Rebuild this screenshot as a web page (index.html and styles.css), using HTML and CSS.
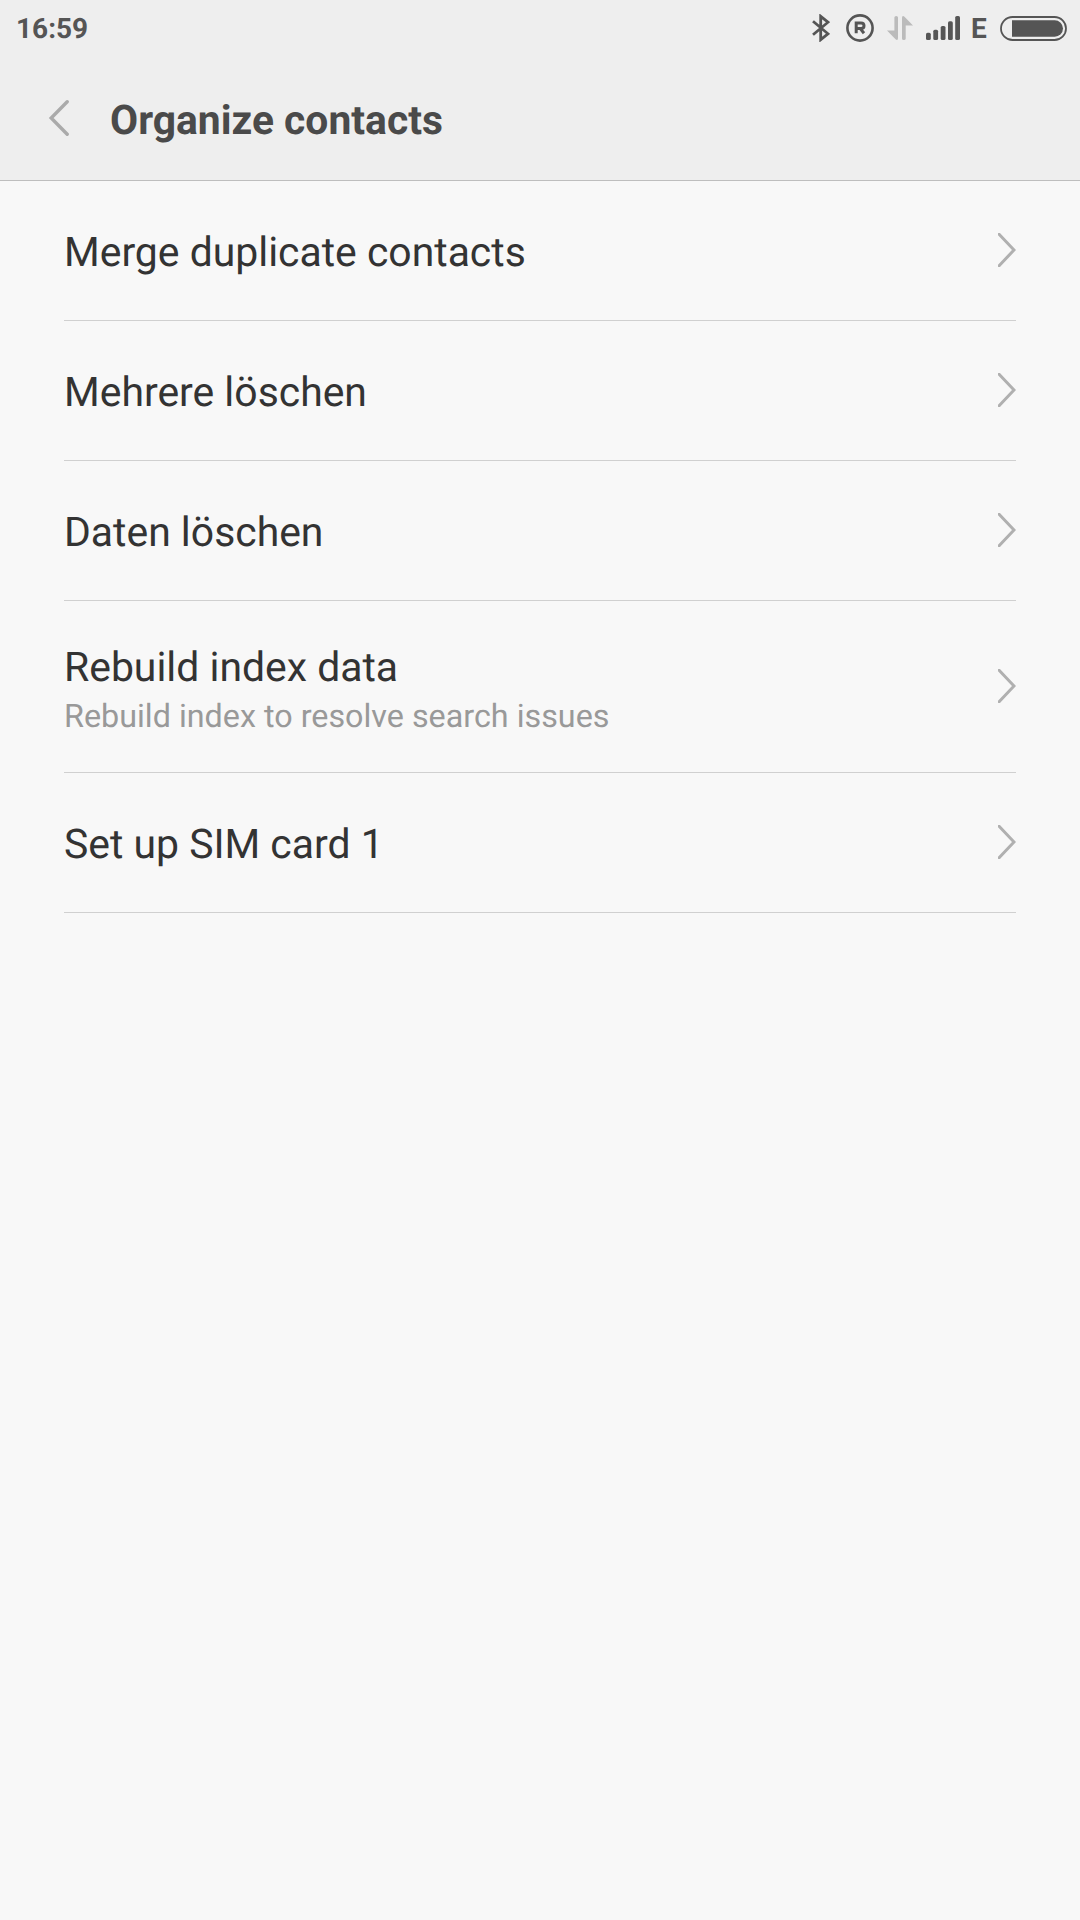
FILE: index.html
```html
<!DOCTYPE html>
<html lang="en">
    <head>
        <meta charset="UTF-8">
        <title>Organize contacts</title>
        <link rel="stylesheet" href="styles.css">
    </head>
    <body>
        <header>
            <div class="status-bar">
                <span class="time">16:59</span>
                <div class="status-icons">
                    <svg class="bluetooth" width="18" height="28" viewBox="0 0 18 28">
                        <path d="M1 7.2 L16 19.8 L8.7 25.7 V2.3 L16 8.2 L1 20.8" />
                    </svg>
                    <svg class="registered" width="28" height="28" viewBox="0 0 28 28">
                        <circle cx="14" cy="14" r="12.6" />
                        <path d="M10.2 19.2 V9 H15 Q18 9 18 11.8 Q18 14.6 15 14.6 H10.2 M14.3 14.6 L18 19.2" />
                    </svg>
                    <svg class="data" width="26" height="24" viewBox="0 0 26 24">
                        <path d="M11 1.5 Q11 0 9.2 0 Q7.4 0 7.4 1.5 V14.6 H0 L8.5 23.3 Q11 25 11 22 Z" />
                        <path d="M15 22.5 Q15 24 16.8 24 Q18.7 24 18.7 22.5 V9.4 H26 L17.5 0.7 Q15 -1 15 2 Z" />
                    </svg>
                    <svg class="signal" width="34" height="24" viewBox="0 0 34 24">
                        <rect x="0" y="16.7" width="4.8" height="7.3" rx="1.6" />
                        <rect x="7.3" y="13.7" width="4.8" height="10.3" rx="1.6" />
                        <rect x="14.7" y="10" width="4.8" height="14" rx="1.6" />
                        <rect x="22" y="5.3" width="4.8" height="18.7" rx="1.6" />
                        <rect x="29.2" y="0" width="4.8" height="24" rx="1.6" />
                    </svg>
                    <span class="network">E</span>
                    <svg class="battery" width="67" height="25" viewBox="0 0 67 25">
                        <rect class="shell" x="1" y="1" width="65" height="23" rx="11.5" />
                        <path class="level" d="M12 4.2 H54.7 A8.3 8.3 0 0 1 54.7 20.8 H12 Z" />
                    </svg>
                </div>
            </div>
            <div class="title-bar">
                <svg class="back" width="22" height="36" viewBox="0 0 22 36">
                    <path d="M19.2 1.8 L3.2 18 L19.2 34.2" />
                </svg>
                <h1>Organize contacts</h1>
            </div>
        </header>
        <ul class="menu">
            <li>
                <div class="label">Merge duplicate contacts</div>
                <svg class="arrow" width="18" height="34" viewBox="0 0 18 34">
                    <path d="M1.1 1.3 L16 17 L1.1 32.7" />
                </svg>
            </li>
            <li>
                <div class="label">Mehrere löschen</div>
                <svg class="arrow" width="18" height="34" viewBox="0 0 18 34">
                    <path d="M1.1 1.3 L16 17 L1.1 32.7" />
                </svg>
            </li>
            <li>
                <div class="label">Daten löschen</div>
                <svg class="arrow" width="18" height="34" viewBox="0 0 18 34">
                    <path d="M1.1 1.3 L16 17 L1.1 32.7" />
                </svg>
            </li>
            <li class="two-line">
                <div>
                    <div class="label">Rebuild index data</div>
                    <div class="summary">Rebuild index to resolve search issues</div>
                </div>
                <svg class="arrow" width="18" height="34" viewBox="0 0 18 34">
                    <path d="M1.1 1.3 L16 17 L1.1 32.7" />
                </svg>
            </li>
            <li>
                <div class="label">Set up SIM card 1</div>
                <svg class="arrow" width="18" height="34" viewBox="0 0 18 34">
                    <path d="M1.1 1.3 L16 17 L1.1 32.7" />
                </svg>
            </li>
        </ul>
    </body>
</html>
```
FILE: styles.css
```css
* {
    box-sizing: border-box;
}

body {
    margin: 0;
    min-height: 100vh;
    background-color: #f8f8f8;
    font-family: Roboto, sans-serif;
    text-rendering: geometricPrecision;
    color: #333;
}

header {
    height: 181px;
    background-color: #eee;
    border-bottom: 1px solid #bebebe;
}

/* status bar */
.status-bar {
    display: flex;
    justify-content: space-between;
    align-items: center;
    height: 56px;
    padding: 0 13px 0 16px;
    color: #555;
    font-size: 28px;
    font-weight: bold;
    line-height: 56px;
}

.time,
.network {
    padding-top: 1px;
}

.status-icons {
    display: flex;
    align-items: center;
    height: 56px;
}

.status-icons svg {
    display: block;
    fill: #555;
}

.bluetooth {
    margin-right: 16px;
}

.status-icons .bluetooth,
.status-icons .registered {
    fill: none;
    stroke: #555;
    stroke-width: 2.8;
}

.registered {
    margin-right: 13px;
}

.status-icons .registered circle {
    stroke-width: 2.6;
}

.status-icons .registered path {
    stroke-width: 3;
}

.status-icons .data {
    fill: #bbb;
    margin-right: 13px;
}

.network {
    width: 17px;
    margin: 0 12px 0 11px;
}

.status-icons .shell {
    fill: none;
    stroke: #555;
    stroke-width: 1.8;
}

/* title bar */
.title-bar {
    display: flex;
    align-items: center;
    height: 124px;
    padding: 0 0 0 48px;
}

.back {
    fill: none;
    stroke: #aaa;
    stroke-width: 3.4;
    stroke-linecap: round;
    margin-right: 40px;
}

h1 {
    margin: 0;
    padding-top: 4px;
    font-size: 40.8px;
    line-height: 48px;
    color: #4a4a4a;
}

/* list */
.menu {
    list-style: none;
    margin: 0;
    padding: 0 64px;
}

.menu li {
    display: flex;
    justify-content: space-between;
    align-items: center;
    height: 140px;
    border-bottom: 1px solid #d0d0d0;
}

.menu li.two-line {
    height: 172px;
}

.label {
    font-size: 40.9px;
    line-height: 54px;
    padding-top: 2px;
}

.summary {
    font-size: 32.3px;
    line-height: 38px;
    padding-top: 3px;
    color: #999;
}

.arrow {
    fill: none;
    stroke: #b0b0b0;
    stroke-width: 3;
    stroke-linecap: round;
    margin-bottom: 1px;
}
```
